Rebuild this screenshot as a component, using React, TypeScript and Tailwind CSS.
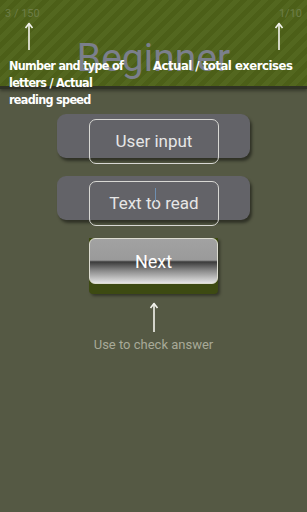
const hand = { fontFamily: '"DejaVu Sans Condensed", "DejaVu Sans", sans-serif' };

function Arrow({ h }: { h: number }) {
  return (
    <svg width="10" height={h} viewBox={`0 0 10 ${h}`} className="block">
      <path d={`M5 2 L5 ${h}`} stroke="#f4f4ee" strokeWidth="1.6" fill="none" />
      <path d="M1.5 6 L5 1.5 L8.5 6" stroke="#f4f4ee" strokeWidth="1.6" fill="none" strokeLinejoin="round" />
    </svg>
  );
}

function InputRow({ label, cursor }: { label: string; cursor?: boolean }) {
  return (
    <div className="relative mx-auto w-[193px] h-[44px] rounded-[9px] bg-[#636368] shadow-[2px_3px_3px_rgba(0,0,0,0.45)]">
      <div className="absolute left-[32px] top-[5px] w-[130px] h-[45px] rounded-[7px] border border-[#d8d8d4] flex items-center justify-center">
        <span className="text-[17px] text-[#e6e6e6]">{label}</span>
        {cursor && <div className="absolute left-[65px] top-[6px] w-px h-[14px] bg-[#6f8fb0]" />}
      </div>
    </div>
  );
}

export default function App() {
  return (
    <div className="w-[307px] h-[512px] bg-[#555944] overflow-hidden" style={{ fontFamily: 'Roboto, sans-serif' }}>
      <div className="relative h-[89px] bg-[repeating-linear-gradient(135deg,#4c5f18_0px,#4c5f18_5px,#53671f_5px,#53671f_10px)] border-b-[3px] border-[#2f3224] shadow-[0_2px_3px_rgba(0,0,0,0.35)]">
        <div className="flex justify-between px-[5px] pt-[6px] text-[11px] text-[#6d7d47]">
          <span>3 / 150</span>
          <span>1/10</span>
        </div>
        <div className="absolute left-0 right-0 top-[39px] text-center text-[39px] leading-none text-[#7b7f8c]">Beginner</div>
      </div>
      <div className="relative h-[0px]">
        <div className="absolute left-[24px] top-[-67px]"><Arrow h={28} /></div>
        <div className="absolute left-[274px] top-[-67px]"><Arrow h={28} /></div>
        <div className="absolute left-[9px] top-[-32px] text-[12.5px] leading-[17px] text-white font-bold tracking-[-0.7px]" style={hand}>
          Number and type of<br />letters / Actual<br />reading speed
        </div>
        <div className="absolute left-[153px] top-[-32px] text-[13px] leading-[17px] text-white font-bold tracking-[-0.5px] whitespace-nowrap" style={hand}>
          Actual / total exercises
        </div>
      </div>
      <div className="pt-[25px] flex flex-col">
        <InputRow label="User input" />
        <div className="h-[18px]" />
        <InputRow label="Text to read" cursor />
        <div className="mt-[18px] mx-auto w-[129px] relative">
          <div className="h-[56px] rounded-b-[4px] bg-[#3d4a12] shadow-[2px_2px_3px_rgba(0,0,0,0.4)]">
            <div className="h-[46px] rounded-[6px] border border-[#dcdcd0] bg-[linear-gradient(180deg,#a2a2a2_0%,#9a9a9a_48%,#3a3a3a_52%,#8a8a8a_72%,#e4e4e4_100%)] flex items-center justify-center">
              <span className="text-[18px] text-white">Next</span>
            </div>
          </div>
        </div>
        <div className="mx-auto mt-[8px]"><Arrow h={30} /></div>
        <div className="mt-[3px] text-center text-[13px] text-[#a8aa98]">Use to check answer</div>
      </div>
    </div>
  );
}
